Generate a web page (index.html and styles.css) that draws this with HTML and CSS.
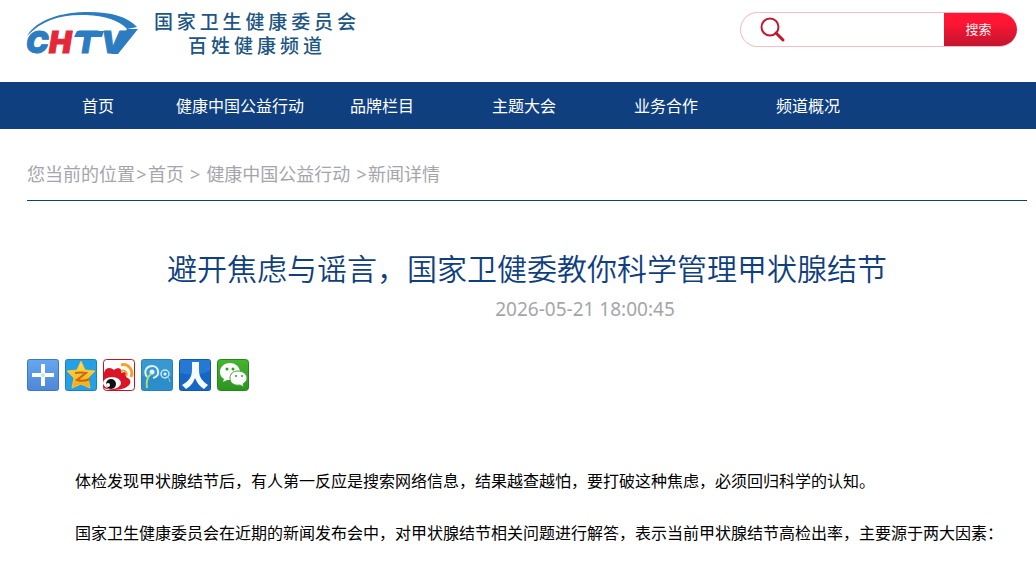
FILE: index.html
```html
<!DOCTYPE html>
<html lang="zh-CN">
<head>
  <meta charset="UTF-8">
  <meta name="viewport" content="width=device-width, initial-scale=1.0">
  <title>避开焦虑与谣言，国家卫健委教你科学管理甲状腺结节</title>
  <link rel="stylesheet" href="styles.css">
</head>
<body>
  <header class="header">
    <a href="#" class="logo">
      <svg class="logo-mark" width="112" height="44" viewBox="0 0 112 44" role="img" aria-label="CHTV">
        <path d="M0 24 C10 7 35 0 62 0 C84 0 101 5 110 15 L100 17 C92 8 78 4 59 3 C34 2 15 8 0 24 Z" fill="#2b7cc0"/>
        <g class="logo-letters" fill="#2b7cc0" stroke="#2b7cc0" stroke-width="1">
          <text x="-1" y="41">C</text>
          <text x="22" y="41" fill="#e62737" stroke="#e62737">H</text>
          <text x="49" y="41">T</text>
          <text x="74" y="41">V</text>
        </g>
        <path d="M50 19 H77 L75 25 H47 Z" fill="#2b7cc0"/>
        <path d="M84 42 L100 17 H111 L91 42 Z" fill="#2b7cc0"/>
      </svg>
      <span class="logo-name">
        <span class="line-top">国家卫生健康委员会</span>
        <span class="line-bottom">百姓健康频道</span>
      </span>
    </a>
    <form class="search">
      <svg width="26" height="26" viewBox="0 0 26 26" fill="none" stroke="#c41530" aria-hidden="true">
        <circle cx="10" cy="10" r="8.5" stroke-width="2"/>
        <path d="M16 16 L23 23" stroke-width="3" stroke-linecap="round"/>
      </svg>
      <input type="text" aria-label="搜索内容">
      <button type="submit">搜索</button>
    </form>
  </header>

  <nav class="nav">
    <a href="#">首页</a>
    <a href="#">健康中国公益行动</a>
    <a href="#">品牌栏目</a>
    <a href="#">主题大会</a>
    <a href="#">业务合作</a>
    <a href="#">频道概况</a>
  </nav>

  <main class="main">
    <div class="crumbs">您当前的位置<span class="sep">&gt;</span><a href="#">首页</a> <span class="sep">&gt;</span> <a href="#">健康中国公益行动</a> <span class="sep">&gt;</span>新闻详情</div>

    <h1>避开焦虑与谣言，国家卫健委教你科学管理甲状腺结节</h1>
    <div class="date">2026-05-21 18:00:45</div>

    <div class="share">
      <a href="#" aria-label="分享">
        <svg width="32" height="32" viewBox="0 0 32 32">
          <defs>
            <linearGradient id="g-add" x1="0" y1="0" x2="0" y2="1"><stop offset="0" stop-color="#65a8ef"/><stop offset="1" stop-color="#4f86d8"/></linearGradient>
          </defs>
          <rect x=".5" y=".5" width="31" height="31" rx="2" fill="url(#g-add)" stroke="#4277bd"/>
          <path d="M16 5 V27 M5 16 H27" stroke="#fff" stroke-width="4"/>
          <path d="M14 16 H18 M16 14 V18" stroke="#cfe2f8" stroke-width="2"/>
        </svg>
      </a>
      <a href="#" aria-label="QQ空间">
        <svg width="32" height="32" viewBox="0 0 32 32">
          <defs>
            <linearGradient id="g-star" x1="0" y1="0" x2="0" y2="1"><stop offset="0" stop-color="#ffe25a"/><stop offset="1" stop-color="#f7a50d"/></linearGradient>
          </defs>
          <rect x=".5" y=".5" width="31" height="31" rx="2" fill="#25a0e6" stroke="#1b7fc0"/>
          <path d="M16 2 L20 11 L30 12 L23 19 L25 29 L16 25 L7 29 L9 19 L2 12 L12 11 Z" fill="url(#g-star)" stroke="#f9c62c" stroke-linejoin="round"/>
          <path d="M10 14 Q16 13 21 14 L12 21 Q18 23 25 20" fill="none" stroke="#c8690e" stroke-width="2"/>
        </svg>
      </a>
      <a href="#" aria-label="新浪微博">
        <svg width="32" height="32" viewBox="0 0 32 32">
          <rect x=".5" y=".5" width="31" height="31" rx="3" fill="#fff" stroke="#b81625"/>
          <path d="M1 14 C2 8 8 8 11 11 C14 8 20 9 18 14 C23 12 25 15 23 18 C30 21 28 26 22 29 C15 32 4 31 1 29 Z" fill="#dc1428"/>
          <ellipse cx="9" cy="24" rx="9" ry="6" fill="#fff"/>
          <circle cx="8" cy="25" r="5" fill="#111"/>
          <circle cx="5" cy="26" r="2" fill="#fff"/>
          <path d="M18 6 C25 4 31 11 28 18" fill="none" stroke="#f5a12c" stroke-width="3"/>
          <path d="M18 12 C22 10 25 14 23 17" fill="none" stroke="#f5a12c" stroke-width="2"/>
        </svg>
      </a>
      <a href="#" aria-label="腾讯微博">
        <svg width="32" height="32" viewBox="0 0 32 32">
          <rect x=".5" y=".5" width="31" height="31" rx="2" fill="#3799d2" stroke="#2d80b4"/>
          <path d="M1 17 H31 V31 H1 Z" fill="#2b8dca"/>
          <path d="M6 18 C2 12 6 7 11 7 C18 7 20 17 12 19" fill="none" stroke="#dff1fb" stroke-width="2"/>
          <circle cx="11" cy="13" r="2.5" fill="#e6f5fc"/>
          <path d="M10 15 C6 18 5 23 6 29" fill="none" stroke="#b4dd73" stroke-width="2"/>
          <circle cx="24" cy="15" r="4" fill="none" stroke="#c4e5f6" stroke-width="1.5"/>
          <circle cx="24" cy="15" r="1.5" fill="#e6f5fc"/>
          <path d="M25 17 Q29 19 29 23" fill="none" stroke="#9cccd0"/>
        </svg>
      </a>
      <a href="#" aria-label="人人网">
        <svg width="32" height="32" viewBox="0 0 32 32">
          <rect x=".5" y=".5" width="31" height="31" rx="2" fill="#1766c3" stroke="#1457a4"/>
          <path d="M1 1 H31 V12 Q16 18 1 14 Z" fill="#2479d5"/>
          <path d="M13 3 H20 V11 C20 18 23 22 29 26 L25 30 C20 27 18 23 16 19 C14 24 12 27 7 30 L3 26 C10 22 13 18 13 11 Z" fill="#f5fbff"/>
        </svg>
      </a>
      <a href="#" aria-label="微信">
        <svg width="32" height="32" viewBox="0 0 32 32">
          <defs>
            <linearGradient id="g-wx" x1="0" y1="0" x2="0" y2="1"><stop offset="0" stop-color="#46b530"/><stop offset="1" stop-color="#2b9420"/></linearGradient>
          </defs>
          <rect x=".5" y=".5" width="31" height="31" rx="3" fill="url(#g-wx)" stroke="#24861c"/>
          <path d="M13 4 C7 4 3 8 3 13 C3 16 4 18 7 20 L6 23 L10 21 H15 C20 20 23 17 23 12 C22 7 18 4 13 4 Z" fill="#fff"/>
          <path d="M21 12 C16 12 13 15 13 19 C13 24 17 27 23 26 L27 28 L26 25 C29 23 30 21 30 19 C30 15 26 12 21 12 Z" fill="#fff" stroke="#44a334"/>
          <g fill="#329d25">
            <circle cx="10" cy="10" r="1.5"/><circle cx="16" cy="10" r="1.5"/>
            <circle cx="19" cy="17" r="1"/><circle cx="25" cy="17" r="1"/>
          </g>
        </svg>
      </a>
    </div>

    <article class="content">
      <p>体检发现甲状腺结节后，有人第一反应是搜索网络信息，结果越查越怕，要打破这种焦虑，必须回归科学的认知。</p>
      <p>国家卫生健康委员会在近期的新闻发布会中，对甲状腺结节相关问题进行解答，表示当前甲状腺结节高检出率，主要源于两大因素：</p>
    </article>
  </main>
</body>
</html>
```
FILE: styles.css
```css
:root {
  --blue: #103f80;
  --grey: #a5a5ab;
}
* {
  box-sizing: border-box;
}
body {
  margin: 0;
  background: #fff;
  color: #000;
  font-family: "Noto Sans CJK SC", sans-serif;
  font-size: 16px;
}
a {
  color: inherit;
  text-decoration: none;
}
.header {
  display: flex;
  justify-content: space-between;
  align-items: flex-start;
  height: 82px;
  padding: 12px 19px 0 27px;
}
.logo {
  display: flex;
  gap: 15px;
}
.logo-mark {
  overflow: visible;
}
.logo-letters {
  font: italic 900 30px Inter, "Liberation Sans", sans-serif;
}
.logo-name {
  display: flex;
  flex-direction: column;
  align-items: center;
  margin-top: -3px;
  color: #1d5583;
  font-size: 19px;
  font-weight: 500;
  line-height: 24px;
}
/* 品牌名两行按宽度均匀分布 */
.line-top,
.line-bottom {
  text-align-last: justify;
}
.line-top {
  width: 202px;
}
.line-bottom {
  width: 134px;
}
.search {
  display: flex;
  align-items: center;
  width: 277px;
  height: 35px;
  padding-left: 19px;
  border: 1px solid #f7bcc4;
  border-right: 0;
  border-radius: 18px;
  overflow: hidden;
}
.search input {
  flex: 1;
  min-width: 0;
  height: 33px;
  padding: 0 8px;
  border: 0;
  outline: none;
  background: none;
  font-size: 14px;
}
.search button {
  width: 73px;
  height: 35px;
  padding: 0 4px 2px 0;
  border: 0;
  background: linear-gradient(#ff1634 30%, #bf152f);
  color: #fff;
  font-family: inherit;
  font-size: 13px;
  font-weight: 350;
  cursor: pointer;
}
.nav {
  display: flex;
  padding-left: 27px;
  background: var(--blue);
  color: #fff;
}
.nav a {
  width: 142px;
  line-height: 47px;
  text-align: center;
}
.main {
  padding: 0 9px 0 27px;
}
.crumbs {
  padding: 29px 0 10px;
  border-bottom: 1px solid var(--blue);
  color: var(--grey);
  font-family: "Noto Sans", "Noto Sans CJK SC", sans-serif;
  font-size: 18px;
  line-height: 32px;
}
.sep {
  display: inline-block;
  width: 13px;
  text-align: center;
}
h1 {
  margin: 46px 0 0;
  color: var(--blue);
  font-size: 30px;
  font-weight: 350;
  line-height: 40px;
  text-align: center;
}
.date {
  padding-left: 116px;
  color: var(--grey);
  font-family: "Noto Sans", sans-serif;
  font-size: 19px;
  line-height: 44px;
  text-align: center;
}
.share {
  display: flex;
  gap: 6px;
  margin-top: 28px;
}
.share svg {
  display: block;
}
.content {
  margin-top: 75px;
}
.content p {
  margin: 0 0 24px;
  line-height: 28px;
  text-indent: 3em;
}
.content p:last-child {
  margin-bottom: 0;
}
```
